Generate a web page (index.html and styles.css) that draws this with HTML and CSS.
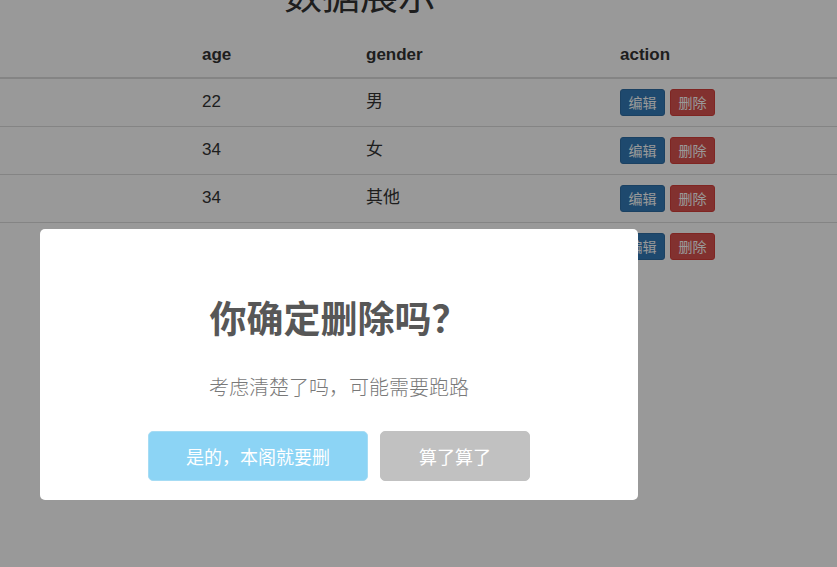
FILE: index.html
```html
<!DOCTYPE html>
<html lang="zh-CN">
<head>
<meta charset="utf-8">
<title>数据展示</title>
<link rel="stylesheet" href="styles.css">
</head>
<body>
<div class="page">
  <h1 class="page-title">数据展示</h1>
  <table class="data">
    <colgroup>
      <col class="c-id">
      <col class="c-age">
      <col class="c-gender">
      <col class="c-action">
    </colgroup>
    <thead>
      <tr><th></th><th>age</th><th>gender</th><th>action</th></tr>
    </thead>
    <tbody>
      <tr><td></td><td>22</td><td>男</td><td><div class="actions"><button class="btn btn-edit">编辑</button><button class="btn btn-del">删除</button></div></td></tr>
      <tr><td></td><td>34</td><td>女</td><td><div class="actions"><button class="btn btn-edit">编辑</button><button class="btn btn-del">删除</button></div></td></tr>
      <tr><td></td><td>34</td><td>其他</td><td><div class="actions"><button class="btn btn-edit">编辑</button><button class="btn btn-del">删除</button></div></td></tr>
      <tr><td></td><td>28</td><td>男</td><td><div class="actions"><button class="btn btn-edit">编辑</button><button class="btn btn-del">删除</button></div></td></tr>
    </tbody>
  </table>
</div>
<div class="overlay"></div>
<div class="alert">
  <h2 class="alert-title">你确定删除吗？</h2>
  <p class="alert-text">考虑清楚了吗，可能需要跑路</p>
  <div class="alert-actions">
    <button class="alert-btn alert-confirm">是的，本阁就要删</button>
    <button class="alert-btn alert-cancel">算了算了</button>
  </div>
</div>
</body>
</html>
```
FILE: styles.css
```css
html, body {
  margin: 0;
  padding: 0;
  background: #ffffff;
  overflow: hidden;
}
body {
  font-family: "Liberation Sans", "Noto Sans CJK SC", sans-serif;
  font-size: 17px;
  color: #333333;
}
.page {
  width: 100%;
}
.page-title {
  width: 720px;
  margin: -27px 0 17px;
  text-align: center;
  font-family: "Noto Sans CJK SC", sans-serif;
  font-size: 38px;
  line-height: 40px;
  font-weight: 400;
  color: #333333;
}
.data {
  width: 100%;
  border-collapse: collapse;
  table-layout: fixed;
}
.c-id { width: 194px; }
.c-age { width: 164px; }
.c-gender { width: 254px; }
.data th,
.data td {
  text-align: left;
  padding: 13px 8px 14px;
  line-height: 20px;
  vertical-align: middle;
}
.data th {
  padding: 15px 8px 12px;
  font-weight: 700;
  border-bottom: 2px solid #dddddd;
}
.data td {
  border-top: 1px solid #dddddd;
}
.data thead + tbody tr:first-child td {
  border-top: 0;
}
.actions {
  display: flex;
  gap: 5px;
}
.btn {
  font-family: "Noto Sans CJK SC", sans-serif;
  font-size: 14px;
  line-height: 19px;
  padding: 3px 7.5px;
  border: 1px solid transparent;
  border-radius: 3px;
  color: #ffffff;
  margin: -4px 0;
}
.btn-edit {
  background: #337ab7;
  border-color: #2e6da4;
}
.btn-del {
  background: #d9534f;
  border-color: #d43f3a;
}
.overlay {
  position: fixed;
  inset: 0;
  background: rgba(0, 0, 0, 0.4);
}
.alert {
  position: fixed;
  left: 40px;
  top: 229px;
  width: 598px;
  height: 271px;
  box-sizing: border-box;
  padding: 66px 0 19px;
  background: #ffffff;
  border-radius: 5px;
  text-align: center;
  font-family: "Noto Sans CJK SC", sans-serif;
}
.alert-title {
  margin: 0;
  font-size: 37px;
  line-height: 44px;
  font-weight: 700;
  color: #575757;
}
.alert-text {
  margin: 35px 0 0;
  font-size: 20px;
  line-height: 26px;
  font-weight: 300;
  color: #797979;
}
.alert-actions {
  margin-top: 31px;
  display: flex;
  justify-content: center;
  gap: 12px;
}
.alert-btn {
  height: 50px;
  padding: 0 37px;
  border: 1px solid transparent;
  border-radius: 5px;
  font-family: "Noto Sans CJK SC", sans-serif;
  font-size: 18px;
  color: #ffffff;
}
.alert-confirm {
  background: #8cd4f5;
  border-color: #a6dcf4;
}
.alert-cancel {
  background: #c1c1c1;
  border-color: #c1c1c1;
  padding: 0 38px;
}
```
